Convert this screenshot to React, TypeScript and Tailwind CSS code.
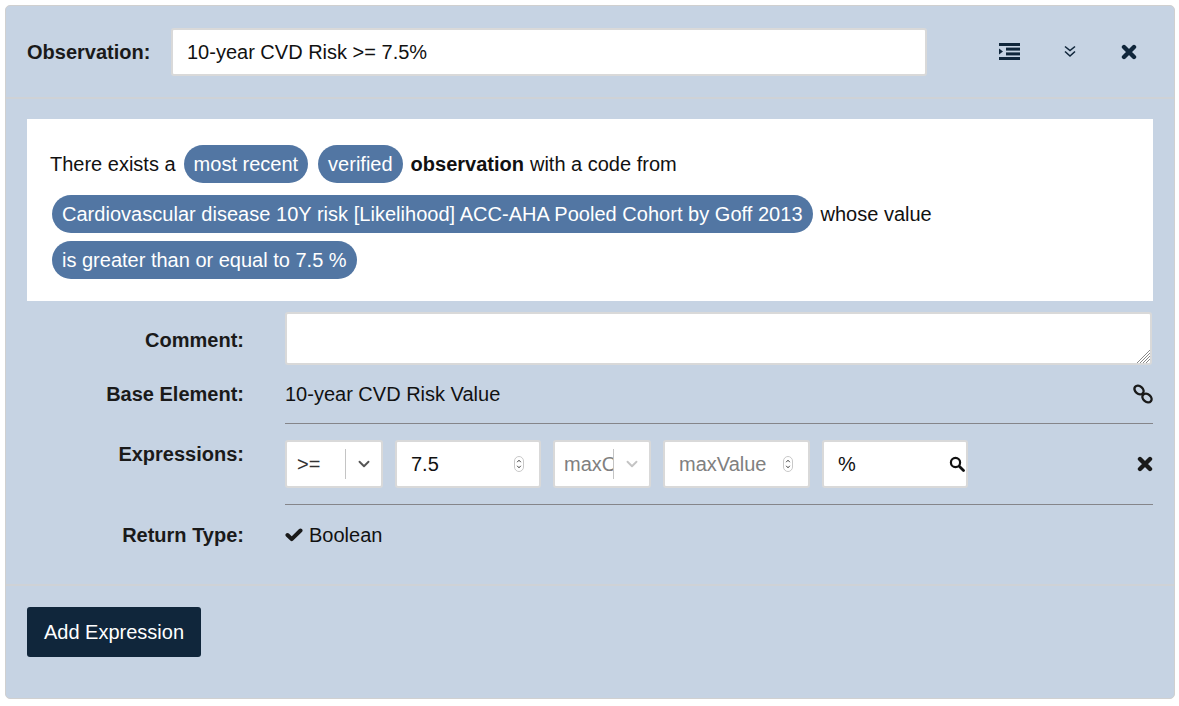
import type { FC, ReactNode } from "react";
import { ChevronDown } from "lucide-react";

const Pill: FC<{ children: ReactNode }> = ({ children }) => (
	<span className="inline-flex h-[38px] items-center rounded-[19px] bg-[#5276a3] px-[10px] whitespace-nowrap text-white">
		{children}
	</span>
);

const Label: FC<{ children: ReactNode }> = ({ children }) => (
	<div className="w-[217px] shrink-0 text-right font-bold text-[#1a1a1a]">{children}</div>
);

const Spinner = () => (
	<svg width="10" height="16" viewBox="0 0 10 16" className="shrink-0">
		<rect x="0.5" y="0.5" width="9" height="15" rx="4.5" fill="#fff" stroke="#c8c8c8" />
		<path d="M3.2 6.2 5 4.2l1.8 2M3.2 9.8 5 11.8l1.8-2" fill="none" stroke="#444" strokeWidth="1" />
	</svg>
);

// fa4 style glyphs, the package ones are too thin
const CloseIcon: FC<{ className?: string }> = ({ className }) => (
	<svg viewBox="0 0 16 16" className={className}>
		<path d="M3 3l10 10M13 3 3 13" fill="none" stroke="currentColor" strokeWidth="4.4" strokeLinecap="round" />
	</svg>
);

const IndentIcon = () => (
	<svg width="21" height="17" viewBox="0 0 21 17" fill="currentColor">
		<rect width="21" height="3" />
		<rect y="14" width="21" height="3" />
		<rect x="7" y="4.6" width="14" height="3" />
		<rect x="7" y="9.4" width="14" height="3" />
		<path d="M0 5.4 4 8.5 0 11.6z" />
	</svg>
);

const DoubleChevron = () => (
	<svg width="14" height="13" viewBox="0 0 14 13" fill="none" stroke="currentColor" strokeWidth="1.6">
		<path d="M2 1.5l5 4 5-4M2 6.5l5 4.5 5-4.5" />
	</svg>
);

const LinkIcon = () => (
	<svg width="20" height="20" viewBox="0 0 20 20" fill="none" stroke="#1a1a1a" strokeWidth="2.4">
		<ellipse cx="6" cy="6" rx="5" ry="3.8" transform="rotate(40 6 6)" />
		<ellipse cx="14" cy="14" rx="5" ry="3.8" transform="rotate(40 14 14)" />
	</svg>
);

const CheckIcon = () => (
	<svg width="18" height="14" viewBox="0 0 18 14" fill="none" stroke="#1a1a1a" strokeWidth="4" strokeLinecap="round" strokeLinejoin="round">
		<path d="M2.5 7l4.2 4.2L15.5 2.5" />
	</svg>
);

const SearchIcon = () => (
	<svg width="16" height="16" viewBox="0 0 16 16" fill="none" stroke="#111" strokeWidth="2.2">
		<circle cx="6.5" cy="6.5" r="4.6" />
		<path d="M10.5 10.5l4 4" strokeWidth="2.8" strokeLinecap="round" />
	</svg>
);

const fieldBox = "flex h-[48px] items-center rounded-[3px] border-2 border-[#d9d9d9] bg-white";

const App: FC = () => (
	<div className="h-[706px] bg-white pt-[5px] pr-[4px] pl-[5px] font-['Liberation_Sans',Arial,sans-serif] text-[20px] leading-[24px] text-[#111]">
		<div className="h-[694px] rounded-[5px] border border-[#d0d0d0] bg-[#c6d3e3]">
			<div className="flex h-[93px] items-center border-b-2 border-[#cfd2d6] pl-[21px]">
				<div className="w-[144px] font-bold text-[#1a1a1a]">Observation:</div>
				<div className={`${fieldBox} w-[756px] pl-[14px]`}>10-year CVD Risk &gt;= 7.5%</div>
				<div className="ml-[72px] flex items-center text-[#10263b]">
					<IndentIcon />
					<span className="ml-[43px]"><DoubleChevron /></span>
					<CloseIcon className="ml-[44px] size-[16px]" />
				</div>
			</div>

			<div className="h-[487px] border-b-2 border-[#cfd2d6] pt-[20px] pr-[21px] pl-[21px]">
				<div className="flex h-[182px] flex-col bg-white pt-[26px] pl-[23px]">
					<div className="flex items-center">
						There exists a
						<span className="ml-[8px]"><Pill>most recent</Pill></span>
						<span className="ml-[10px]"><Pill>verified</Pill></span>
						<b className="ml-[8px]">observation</b>
						<span className="ml-[6px]">with a code from</span>
					</div>
					<div className="mt-[12px] flex items-center pl-[2px]">
						<span className="tracking-[0.025px]">
							<Pill>Cardiovascular disease 10Y risk [Likelihood] ACC-AHA Pooled Cohort by Goff 2013</Pill>
						</span>
						<span className="ml-[8px]">whose value</span>
					</div>
					<div className="mt-[8px] pl-[2px]">
						<Pill>is greater than or equal to 7.5 %</Pill>
					</div>
				</div>

				<div className="mt-[11px] flex">
					<Label><div className="pt-[16px]">Comment:</div></Label>
					<div className="relative ml-[41px] h-[53px] w-[867px]">
						<textarea
							aria-label="Comment"
							className="block h-full w-full resize-none rounded-[3px] border-2 border-[#d9d9d9] bg-white outline-none"
						/>
						<svg width="14" height="14" viewBox="0 0 14 14" className="absolute right-[2px] bottom-[2px]" stroke="#8a8a8a" strokeWidth="1">
							<path d="M1 14 14 1M4 14 14 4M7 14l7-7M10 14l4-4" />
						</svg>
					</div>
				</div>

				<div className="mt-[17px] flex items-center">
					<Label>Base Element:</Label>
					<div className="ml-[41px] flex-1">10-year CVD Risk Value</div>
					<LinkIcon />
				</div>

				<div className="mt-[17px] ml-[258px] border-t border-[#85858a]" />

				<div className="mt-[16px] flex">
					<Label><div className="pt-[2px]">Expressions:</div></Label>
					<div className="ml-[41px] flex flex-1 items-center">
						<div className={`${fieldBox} w-[98px] pl-[10px] text-[#333]`}>
							<span className="w-[48px]">&gt;=</span>
							<span className="h-[30px] border-l border-[#c4c4c4]" />
							<ChevronDown className="ml-[9px] size-[18px] text-[#555]" strokeWidth={2.5} />
						</div>
						<div className={`${fieldBox} ml-[12px] w-[146px] justify-between pr-[15px] pl-[14px]`}>
							7.5
							<Spinner />
						</div>
						<div className={`${fieldBox} ml-[12px] w-[98px] pl-[9px] text-[#808080]`}>
							<span className="w-[49px] overflow-hidden">maxOperator</span>
							<span className="h-[30px] border-l border-[#c4c4c4]" />
							<ChevronDown className="ml-[9px] size-[18px] text-[#c4c4c4]" strokeWidth={2.5} />
						</div>
						<div className={`${fieldBox} ml-[12px] w-[147px] justify-between pr-[15px] pl-[14px] text-[#808080]`}>
							maxValue
							<Spinner />
						</div>
						<div className={`${fieldBox} ml-[12px] w-[146px] justify-between pr-[1px] pl-[14px]`}>
							%
							<SearchIcon />
						</div>
						<CloseIcon className="ml-auto size-[16px] text-[#1a1a1a]" />
					</div>
				</div>

				<div className="mt-[16px] ml-[258px] border-t border-[#85858a]" />

				<div className="mt-[18px] flex items-center">
					<Label>Return Type:</Label>
					<span className="ml-[41px]"><CheckIcon /></span>
					<span className="ml-[6px]">Boolean</span>
				</div>
			</div>

			<div className="pt-[21px] pl-[21px]">
				<button
					type="button"
					className="h-[50px] w-[174px] rounded-[3px] bg-[#10263b] text-[20px] text-white"
				>
					Add Expression
				</button>
			</div>
		</div>
	</div>
);

export default App;
